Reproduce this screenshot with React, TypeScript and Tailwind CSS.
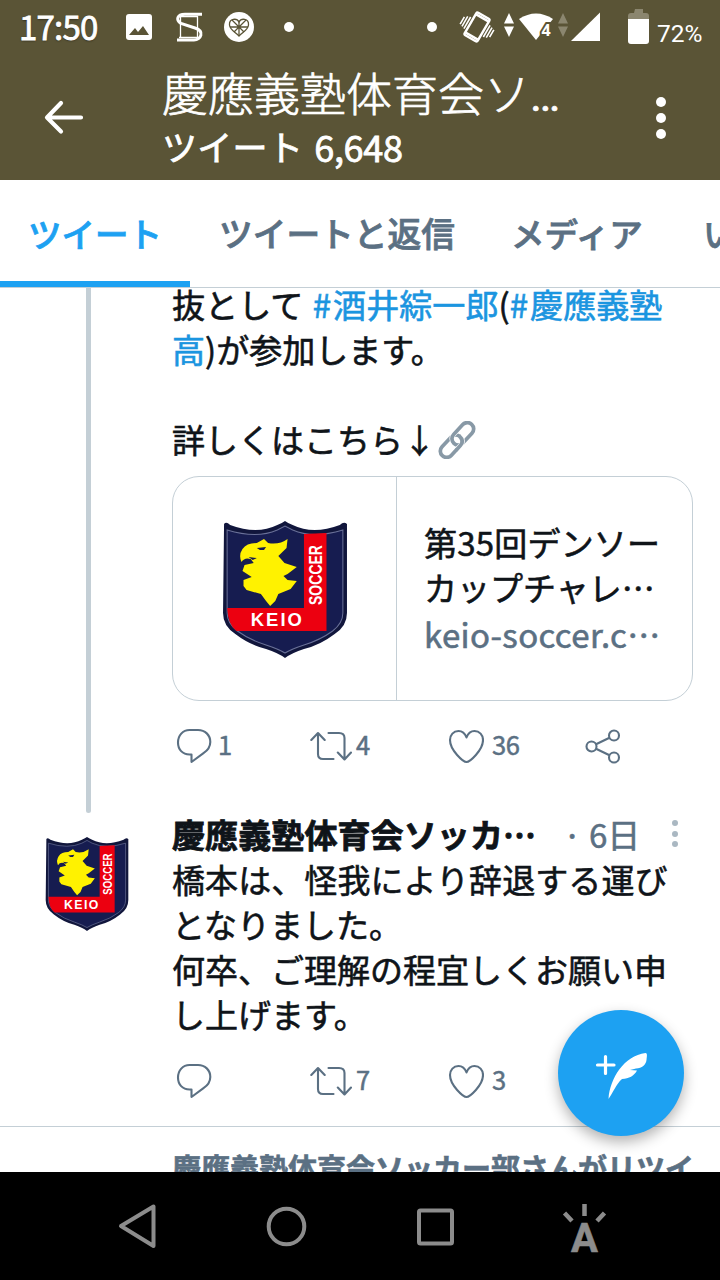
import type { ReactNode } from 'react';

// ─── ICONS ───

function Emblem({ className }: { className: string }) {
  const shield =
    'M2 3Q4 0 8 4Q34 14 54 4Q59 2 61.500 0Q64 2 69 4Q89 14 115 4Q119 0 122 3V92Q122 105 110 113Q96 124 80 128Q68 132 61.500 137Q55 132 43 128Q27 124 13 113Q1 105 1 92Z';
  return (
    <svg viewBox="0 0 123 137" preserveAspectRatio="none" className={`[-webkit-text-stroke:0] ${className}`}>
      <path d={shield} fill="#11163c" />
      <path
        d="M5 9Q34 18 54 9L61.500 5L69 9Q89 18 118 9V92Q118 102 108 110Q96 119 80 124Q68 128 61.500 132Q55 128 43 124Q27 119 15 110Q5 102 5 92Z"
        fill="#161c50"
        stroke="#6a7198"
        strokeWidth="1"
      />
      <path d="M80 13L102 12V110H14Q6 104 5 87H80Z" fill="#ec0010" />
      <path
        d="M19 41Q16 34 20 28Q24 22 34 22L41 18L45 22Q56 24 64 18L63 27L55 35L61 42L73 46L64 53L60 55L64 59L73 60L67 68L55 73L52 80L47 85L43 80L38 73L24 69L21 65L21 59L29 56L20 50L22 44L31 42L28 38Q22 36 19 41Z"
        fill="#fff200"
      />
      <path d="M34 27L43 26L41 29L37 29ZM26 36L34 37L30 39Z" fill="#161c50" />
      <text x="28" y="105" textLength="50" fill="#fff" className="font-['Liberation_Sans'] text-[18px] font-bold">
        KEIO
      </text>
      <text
        transform="translate(98 84) rotate(-90)"
        textLength="60"
        lengthAdjust="spacingAndGlyphs"
        fill="#fff"
        className="font-['Liberation_Sans'] text-[18px] font-bold"
      >
        SOCCER
      </text>
    </svg>
  );
}

function ReplyIcon() {
  return (
    <svg width="36" height="36" viewBox="0 0 36 36" fill="none" stroke="#5b7083" strokeWidth="2.1" strokeLinejoin="round">
      <path d="M13.500 2H22C29 2 34.300 7 34.300 14C34.300 19 31.500 22.500 27.500 25.200L15.500 34V26.500H13.500C6.500 26.500 2 21.500 2 14.500C2 7.500 6.800 2 13.500 2Z" />
    </svg>
  );
}

function RetweetIcon() {
  return (
    <svg width="42" height="36" viewBox="0 0 42 36" fill="none" stroke="#5b7083" strokeWidth="2.1" strokeLinecap="round" strokeLinejoin="round">
      <path d="M1.300 12L8 5L14.700 12M8 5.500V26Q8 31 13 31H23.500" />
      <path d="M18.500 5H29Q34.500 5 34.500 10V31M27.800 24.500L34.500 31.500L41 24.500" />
    </svg>
  );
}

function HeartIcon() {
  return (
    <svg width="36" height="36" viewBox="0 0 36 36" fill="none" stroke="#5b7083" strokeWidth="2.1" strokeLinejoin="round">
      <path d="M18.500 9.500C20 5.500 23 3 26.500 3C31.500 3 35 7 35 12C35 22.500 21.500 34 18.500 34C15.500 34 2 22.500 2 12C2 7 5.500 3 10.500 3C14 3 17 5.500 18.500 9.500Z" />
    </svg>
  );
}

function ShareIcon() {
  return (
    <svg width="36" height="36" viewBox="0 0 36 36" fill="none" stroke="#5b7083" strokeWidth="2.1">
      <circle cx="6.500" cy="18.500" r="5" />
      <circle cx="29" cy="7.500" r="5" />
      <circle cx="29" cy="29.500" r="5" />
      <path d="M11 16.300L24.500 9.700M11 20.700L24.500 27.300" />
    </svg>
  );
}

// Links drawn along one axis, then turned 45deg
function LinkEmoji() {
  return (
    <svg width="38" height="38" viewBox="0 0 38 38" fill="none" stroke="#8899a6" strokeWidth="3.700" className="ml-[2px] shrink-0">
      <g transform="rotate(-47 19 19)">
        <rect x="-2.500" y="12.700" width="26" height="12.600" rx="6.300" />
        <rect x="14.500" y="12.700" width="26" height="12.600" rx="6.300" stroke="#fff" strokeWidth="5" />
        <rect x="14.500" y="12.700" width="26" height="12.600" rx="6.300" />
        <path d="M12 25.300H17.200Q23.500 25.300 23.500 18" stroke="#fff" strokeWidth="5" />
        <path d="M11 25.300H17.200Q23.500 25.300 23.500 17.500" />
      </g>
    </svg>
  );
}

// ─── BARS ───

function StatusBar() {
  return (
    <div className="flex h-[54px] items-center text-white">
      <span className="-mt-[2px] ml-[19px] w-[106px] font-['Noto_Sans_CJK_JP',sans-serif] text-[33px] leading-none tracking-[-0.800px] [text-shadow:0_1px_2px_#0008] [-webkit-text-stroke:0.800px]">
        17:50
      </span>
      <svg width="180" height="54" viewBox="0 0 180 54">
        <rect x="1" y="14" width="26" height="26" rx="3" fill="#fff" />
        <path d="M4 35L10 28L13 32L18 26L24 35Z" fill="#5a5436" />
        <g fill="none" stroke="#fff">
          <path d="M55.500 16V37.500M72.500 16V37.500M54 16.500H73M54 37.500H74" strokeWidth="1.300" />
          <path d="M77 14.300H60C52 14.300 50.500 20 56 23.500L70 28C80 31 76 40 69 40H52" strokeWidth="3" />
        </g>
        <circle cx="114" cy="27" r="15" fill="#fff" />
        <g fill="none" stroke="#5a5436" strokeWidth="1.300">
          <path d="M114 22C112 18 104 18 104.500 25C105 30 110 32 114 36C118 32 123 30 123.500 25C124 18 116 18 114 22Z" />
          <path d="M114 22V36M105 27H123M107 20L119 32M121 20L109 32" />
        </g>
        <circle cx="164" cy="27" r="5" fill="#fff" />
      </svg>
      <svg width="240" height="54" viewBox="420 0 240 54" className="ml-[115px] shrink-0">
        <circle cx="432" cy="27" r="5" fill="#fff" />
        <g transform="rotate(30 477 27)" fill="none" stroke="#fff">
          <rect x="469.500" y="14" width="15" height="26" rx="1.500" strokeWidth="2.400" />
          <path d="M470 16.500H484M470 37.500H484" strokeWidth="2.400" />
          <path d="M466.500 21.500V35M463.700 22.500V34M461 24.500V33M487.500 19V32.500M490.300 20V31.500M493 21V29.500" strokeWidth="1.600" />
        </g>
        <path d="M504 23.500L509 13L514 23.500ZM504 26.500H514L509 37Z" fill="#fff" />
        <path d="M519 19Q536 8 553 19L536 40Z" fill="#fff" />
        <text x="541.500" y="36" fill="#fff" stroke="#5a5436" strokeWidth="4" paintOrder="stroke" className="font-['Open_Sans'] text-[16px] font-bold">
          4
        </text>
        <path d="M558 23.500L563 13L568 23.500ZM558 26.500H568L563 37Z" fill="#8b866f" />
        <path d="M571 41L600 12.500V41Z" fill="#fff" />
        <path d="M635 9H643V13H646Q649 13 649 16V20H628V16Q628 13 631 13H634Z" fill="#8b866f" />
        <path d="M628 19H649V41Q649 44 646 44H631Q628 44 628 41Z" fill="#fff" />
      </svg>
      <span className="mt-[14px] -ml-[3px] font-[Roboto] text-[24.500px] leading-none">72%</span>
    </div>
  );
}

function ProfileHeader() {
  return (
    <header className="h-[180px] bg-[#5a5436] text-white">
      <StatusBar />
      <div className="flex h-[126px]">
        <svg width="42" height="42" viewBox="0 0 42 42" fill="none" stroke="#fff" strokeWidth="4.200" strokeLinecap="round" strokeLinejoin="round" className="mt-[43px] ml-[43px]">
          <path d="M38 20.500H5M18 6L4 20.500L18 34.500" />
        </svg>
        <div className="ml-[77px] w-[440px] whitespace-nowrap">
          <h1 className="mt-[9px] h-[58px] text-[46px] leading-[56px] font-light [-webkit-text-stroke:0.700px]">
            慶應義塾体育会ソ<span className="font-[Roboto] text-[45px] font-normal">…</span>
          </h1>
          <p className="flex h-[50px] text-[34.500px] leading-[50px] [-webkit-text-stroke:0.800px]">
            <span className="text-[35px] tracking-[0.300px]">ツイート</span>
            <span className="ml-[11px] text-[36px] tracking-[-0.300px]">6,648</span>
          </p>
        </div>
        <div className="mt-[43px] ml-[54px] flex flex-col gap-[6px]">
          <i className="size-[10px] rounded-full bg-white" />
          <i className="size-[10px] rounded-full bg-white" />
          <i className="size-[10px] rounded-full bg-white" />
        </div>
      </div>
    </header>
  );
}

function Tabs() {
  return (
    <nav className="flex h-[108px] overflow-hidden border-b border-[#c4cfd6] text-[33.500px] leading-[106px] font-medium whitespace-nowrap text-[#5b7083] [-webkit-text-stroke:0.800px]">
      <div className="h-[108px] w-[190px] shrink-0 border-b-[7px] border-[#1da1f2] pl-[28px] text-[#1da1f2]">ツイート</div>
      <div className="ml-[29px] w-[292px] shrink-0 text-[33.700px]">ツイートと返信</div>
      <div className="w-[192px] shrink-0">メディア</div>
      <div className="shrink-0">いいね</div>
    </nav>
  );
}

function NavBar() {
  return (
    <footer className="flex h-[108px] bg-black">
      <svg width="720" height="108" viewBox="0 0 720 108" fill="none" stroke="#8c8c8c" strokeWidth="4">
        <path d="M121 54L153.500 34.500V74Z" strokeLinejoin="round" />
        <circle cx="286.500" cy="54.500" r="17.800" />
        <rect x="419" y="38.500" width="33" height="33" rx="1.500" />
        <path d="M584.500 32V44M564.500 41L572 49M604.500 41L597 49" strokeWidth="4.500" />
        <text x="584.500" y="80" textAnchor="middle" fill="#8c8c8c" stroke="#8c8c8c" strokeWidth="0.600" className="font-[Roboto] text-[40px] font-bold">
          A
        </text>
      </svg>
    </footer>
  );
}

// ─── TWEETS ───

interface ActionProps {
  replies?: string;
  retweets: string;
  likes: string;
  share?: boolean;
}

function Action({ icon, count, className }: { icon: ReactNode; count?: string; className: string }) {
  return (
    <div className={`flex shrink-0 ${className}`}>
      {icon}
      <span className="-mt-[2px]">{count}</span>
    </div>
  );
}

function Actions({ replies, retweets, likes, share }: ActionProps) {
  return (
    <div className="flex h-9 pl-1 text-[25.500px] leading-9 tracking-[-0.500px] text-[#5b7083] [-webkit-text-stroke:0.500px]">
      <Action icon={<ReplyIcon />} count={replies} className="w-[134px] gap-[6px]" />
      <Action icon={<RetweetIcon />} count={retweets} className="w-[138px] gap-[4px]" />
      <Action icon={<HeartIcon />} count={likes} className="w-[137px] gap-[8px]" />
      {share && <ShareIcon />}
    </div>
  );
}

export default function App() {
  return (
    <div lang="ja" className="flex h-[1280px] w-[720px] flex-col overflow-hidden bg-white font-['Noto_Sans_CJK_JP',sans-serif] text-[#0f1419]">
      <ProfileHeader />
      <Tabs />

      <main className="relative h-[884px] overflow-hidden text-[33px] leading-[45px] whitespace-nowrap">
        <article className="flex h-[525px]">
          <div className="w-[172px] shrink-0 pl-[86px]">
            <div className="h-full w-[5px] rounded-b-full bg-[#c4cfd6]" />
          </div>
          <div className="-mt-[6px] [-webkit-text-stroke:0.600px]">
            <p className="text-[33.100px]">
              抜として <span className="ml-[2px] text-[#1b95e0]"><span className="mr-[2px]">#</span>酒井綜一郎</span>(
              <span className="text-[#1b95e0]"><span className="mr-[2px]">#</span>慶應義塾</span>
            </p>
            <p>
              <span className="text-[#1b95e0]">高</span>)が参加します。
            </p>
            <p>&nbsp;</p>
            <p className="flex items-center">
              詳しくはこちら↓
              <LinkEmoji />
            </p>
            <div className="mt-[14px] flex h-[225px] w-[521px] overflow-hidden rounded-[27px] border border-[#c4cfd6]">
              <div className="w-[224px] border-r border-[#c4cfd6] pt-[44px] pl-[49px]">
                <Emblem className="h-[137px] w-[126px]" />
              </div>
              <div className="pt-[43px] pl-[27px]">
                <p className="tracking-[0.200px]">第35回デンソー</p>
                <p>カップチャレ…</p>
                <p className="flex pt-[2px] text-[#5b7083]">
                  <span className="tracking-[0.350px]">keio-soccer.c</span>
                  <span>…</span>
                </p>
              </div>
            </div>
            <div className="mt-[27px]">
              <Actions replies="1" retweets="4" likes="36" share />
            </div>
          </div>
        </article>

        <article className="flex h-[314px] border-b border-[#c4cfd6]">
          <div className="w-[172px] shrink-0 pt-[24px] pl-[45px]">
            <Emblem className="h-[94px] w-[84px]" />
          </div>
          <div className="-mt-[1px] [-webkit-text-stroke:0.600px]">
            <div className="flex">
              <span className="w-[391px] font-bold tracking-[0.100px] [-webkit-text-stroke:0.800px]">慶應義塾体育会ソッカ…</span>
              <span className="w-[105px] text-[#5b7083]">· 6日</span>
              <div className="mt-[8px] ml-[4px] flex flex-col gap-[4.500px]">
                <i className="size-[6px] rounded-full bg-[#aab8c2]" />
                <i className="size-[6px] rounded-full bg-[#aab8c2]" />
                <i className="size-[6px] rounded-full bg-[#aab8c2]" />
              </div>
            </div>
            <p className="tracking-[0.080px]">橋本は、怪我により辞退する運び</p>
            <p>となりました。</p>
            <p>何卒、ご理解の程宜しくお願い申</p>
            <p>し上げます。</p>
            <div className="mt-[26px]">
              <Actions retweets="7" likes="3" />
            </div>
          </div>
        </article>

        <p className="pt-[18px] pl-[172px] text-[29px] leading-[45px] font-bold text-[#5b7083] [-webkit-text-stroke:0.600px]">慶應義塾体育会ソッカー部さんがリツイ</p>

        {/* Compose button */}
        <button className="absolute top-[722px] left-[558px] size-[126px] rounded-full bg-[#1da1f2] shadow-[0_6px_14px_#0000004d]">
          <svg width="126" height="126" viewBox="0 0 126 126" fill="#fff">
            <path d="M39.500 55H56M47.500 46.500V63.500" stroke="#fff" strokeWidth="3.200" strokeLinecap="round" />
            <path d="M50.500 89C52 68 66 46 87.500 43C89.500 43 89 46 88.500 50C88 55 84 58 78 58.500L72 60L79 60.500C76 66 71 68.500 64 69C58 74 55 83 50.500 89Z" />
          </svg>
        </button>
      </main>

      <NavBar />
    </div>
  );
}
